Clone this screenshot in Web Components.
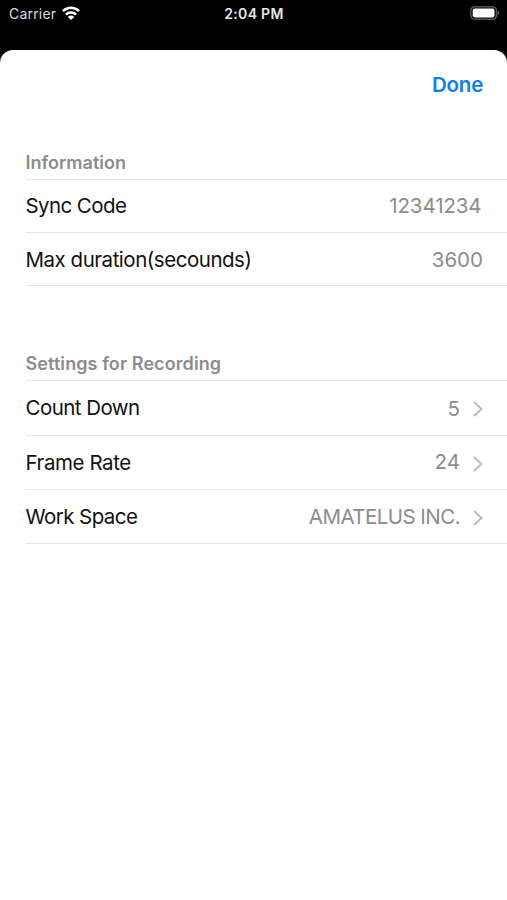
<!DOCTYPE html>
<html lang="en">
<head>
<meta charset="utf-8">
<title>Settings</title>
<style>
html, body { margin: 0; height: 100%; background: #000; overflow: hidden; }
body { font-family: Inter, "Liberation Sans", sans-serif; }
</style>
</head>
<body>
<settings-screen></settings-screen>
<script>
class BaseElement extends HTMLElement {
  constructor() {
    super();
    this.attachShadow({ mode: 'open' }).innerHTML = this.constructor.markup;
  }
}

class StatusBar extends BaseElement {
  static markup = `
    <style>
      :host { display: grid; grid-template-columns: 1fr auto 1fr; align-items: center; height: 28px; padding: 0 7px 0 9px; box-sizing: border-box; background: #000; color: #dcdcdc; font-size: 14px; line-height: 28px; }
      .left { display: flex; align-items: center; gap: 6px; }
      .carrier { letter-spacing: .2px; }
      .time { font-weight: 600; font-size: 14px; letter-spacing: .3px; margin-right: 1px; color: #e8e8e8; }
      svg { display: block; }
      .left svg { margin-top: -2px; }
      .battery { justify-self: end; margin-top: -2px; }
    </style>
    <div class="left"><span class="carrier">Carrier</span>
      <svg width="18" height="14" viewBox="0 0 18 14" fill="none" stroke="#fff" stroke-width="2.6">
        <path d="M.9 5.1a11.5 11.5 0 0 1 16.2 0"/><path d="M3.9 8.6a7.3 7.3 0 0 1 10.2 0"/>
        <path d="M9 14 5.8 11a4.4 4.4 0 0 1 6.4 0Z" fill="#fff" stroke="none"/>
      </svg></div>
    <span class="time">2:04 PM</span>
    <svg class="battery" width="30" height="14" viewBox="0 0 30 14">
      <rect x=".8" y=".8" width="25.6" height="12.4" rx="3.6" fill="none" stroke="#626262" stroke-width="1.3"/>
      <rect x="2.7" y="2.6" width="21.8" height="8.8" rx="1.8" fill="#fff"/>
      <path d="M27.8 4.8q1.7.7 1.7 2.2t-1.7 2.2Z" fill="#626262"/>
    </svg>`;
}

class SheetPanel extends BaseElement {
  static markup = `
    <style>
      :host { display: block; flex: 1; margin-top: 22px; background: #fff; border-radius: 13px 13px 0 0; box-sizing: border-box; }
      header { display: flex; justify-content: flex-end; padding: 0 24px 0 0; height: 98px; box-sizing: border-box; }
    </style>
    <header><slot name="action"></slot></header>
    <slot></slot>`;
}

class DoneButton extends BaseElement {
  static markup = `
    <style>
      :host { display: block; padding-top: 21px; color: #0b7df5; font-size: 20.5px; font-weight: 600; line-height: 28px; letter-spacing: -.25px; }
    </style>
    <span><slot></slot></span>`;
}

class SettingsGroup extends BaseElement {
  static markup = `
    <style>
      :host { display: block; margin-left: 25.5px; }
      h2 { margin: 0; height: 32px; box-sizing: border-box; border-bottom: 1px solid #e5e5e5; color: #8c8c8e; font-size: 18px; font-weight: 600; line-height: 30px; letter-spacing: var(--title-spacing, 0); }
    </style>
    <h2><span><slot name="title"></slot></span></h2>
    <slot></slot>`;
}

class SettingsRow extends BaseElement {
  static markup = `
    <style>
      :host { display: flex; justify-content: space-between; height: var(--height, 53px); box-sizing: border-box; padding-right: 24px; border-bottom: 1px solid #e5e5e5; font-size: 20.5px; line-height: 52px; color: #111; }
      .label { letter-spacing: var(--label-spacing, -.5px); padding-top: var(--label-shift, 0); }
      .trail { display: flex; color: #8c8c8e; letter-spacing: var(--value-spacing, 0); margin-right: var(--value-inset, 0); }
      .value { padding-top: var(--value-shift, 0); }
      svg { display: none; margin: 19.5px .5px 0 12.5px; }
      :host([link]) svg { display: block; }
    </style>
    <span class="label"><slot name="label"></slot></span>
    <div class="trail"><span class="value"><slot></slot></span>
      <svg width="10" height="16" viewBox="0 0 10 16" fill="none" stroke="#bcbcbe" stroke-width="2"><path d="m1 1.1 7.5 6.9L1 14.9"/></svg></div>`;
}

class SettingsScreen extends BaseElement {
  static markup = `
    <style>
      :host { display: flex; flex-direction: column; height: 900px; }
      .recording { margin-top: 63px; --title-spacing: .09px; }
      .sync { --label-spacing: -.58px; --value-spacing: -.1px; --value-inset: 1.5px; }
      .duration { --label-spacing: -.47px; --label-shift: 1px; --value-shift: 1px; }
      .count { --height: 55px; --label-spacing: -.54px; --value-shift: 2px; --label-shift: 1px; }
      .rate { --height: 54px; --label-spacing: -.42px; --label-shift: 1px; }
      .space { --height: 54px; --label-spacing: -.58px; --value-spacing: -.54px; --label-shift: 1px; --value-shift: 1px; }
    </style>
    <status-bar></status-bar>
    <sheet-panel>
      <done-button slot="action">Done</done-button>
      <settings-group><span slot="title">Information</span>
        <settings-row class="sync"><span slot="label">Sync Code</span>12341234</settings-row>
        <settings-row class="duration"><span slot="label">Max duration(secounds)</span>3600</settings-row>
      </settings-group>
      <settings-group class="recording"><span slot="title">Settings for Recording</span>
        <settings-row link class="count"><span slot="label">Count Down</span>5</settings-row>
        <settings-row link class="rate"><span slot="label">Frame Rate</span>24</settings-row>
        <settings-row link class="space"><span slot="label">Work Space</span>AMATELUS INC.</settings-row>
      </settings-group>
    </sheet-panel>`;
}

customElements.define('status-bar', StatusBar);
customElements.define('sheet-panel', SheetPanel);
customElements.define('done-button', DoneButton);
customElements.define('settings-group', SettingsGroup);
customElements.define('settings-row', SettingsRow);
customElements.define('settings-screen', SettingsScreen);
</script>
</body>
</html>
